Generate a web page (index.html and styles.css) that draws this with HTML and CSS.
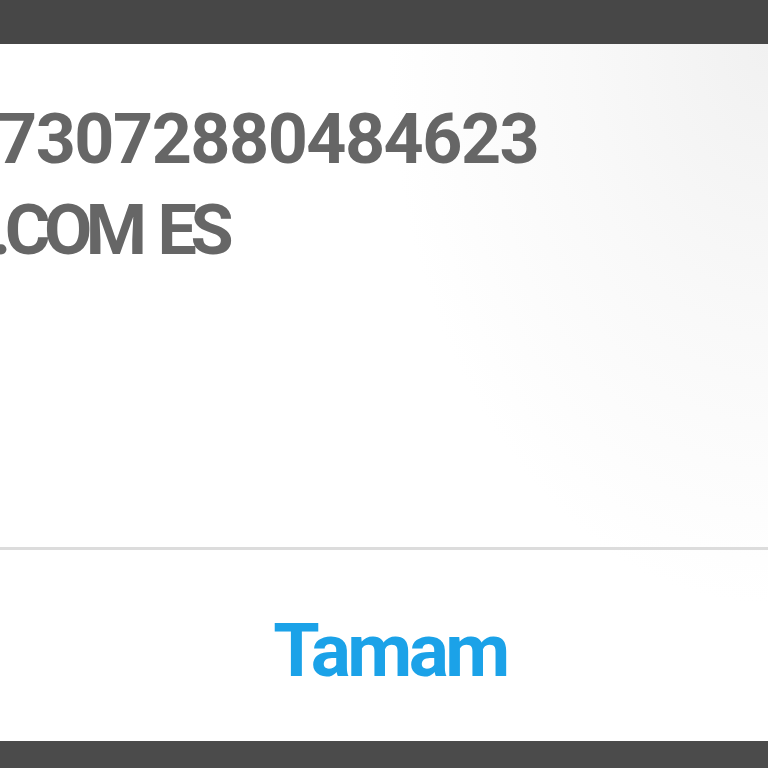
FILE: index.html
```html
<!DOCTYPE html>
<html>
<head>
<meta charset="utf-8">
<link rel="stylesheet" href="styles.css">
</head>
<body>
<div class="screen">
  <div class="topbar"></div>
  <div class="dialog">
    <div class="message">
      <div class="line">73072880484623</div>
      <div class="line line2">.COM ES</div>
    </div>
    <div class="divider"></div>
    <div class="actions">
      <span class="ok">Tamam</span>
    </div>
  </div>
  <div class="bottombar"></div>
</div>
</body>
</html>
```
FILE: styles.css
```css
html, body {
  margin: 0;
  padding: 0;
}
body {
  width: 768px;
  height: 768px;
  overflow: hidden;
  font-family: Roboto, "Liberation Sans", sans-serif;
}
.screen {
  display: flex;
  flex-direction: column;
  height: 768px;
}
.topbar {
  height: 44px;
  background: #474747;
  flex: none;
}
.dialog {
  flex: 1;
  display: flex;
  flex-direction: column;
  background:
    radial-gradient(ellipse 380px 560px at 100% 0%, #f1f1f1 0%, rgba(246,246,246,0.7) 50%, rgba(255,255,255,0) 100%),
    #ffffff;
}
.message {
  height: 503px;
  padding-top: 50px;
  box-sizing: border-box;
  margin-left: -3px;
  color: #666666;
  font-size: 70px;
  font-weight: 700;
  line-height: 91px;
  letter-spacing: -1.5px;
}
.line2 {
  margin-left: -6px;
  letter-spacing: -6.5px;
  word-spacing: 6px;
}
.divider {
  height: 3px;
  background: #dcdcdc;
  flex: none;
}
.actions {
  flex: 1;
  display: flex;
  align-items: center;
  justify-content: center;
  padding-top: 8px;
  padding-left: 12px;
}
.ok {
  color: #1ba2e8;
  font-size: 75px;
  font-weight: 700;
  letter-spacing: -3.5px;
}
.bottombar {
  height: 27px;
  background: #4b4b4b;
  flex: none;
}
```
